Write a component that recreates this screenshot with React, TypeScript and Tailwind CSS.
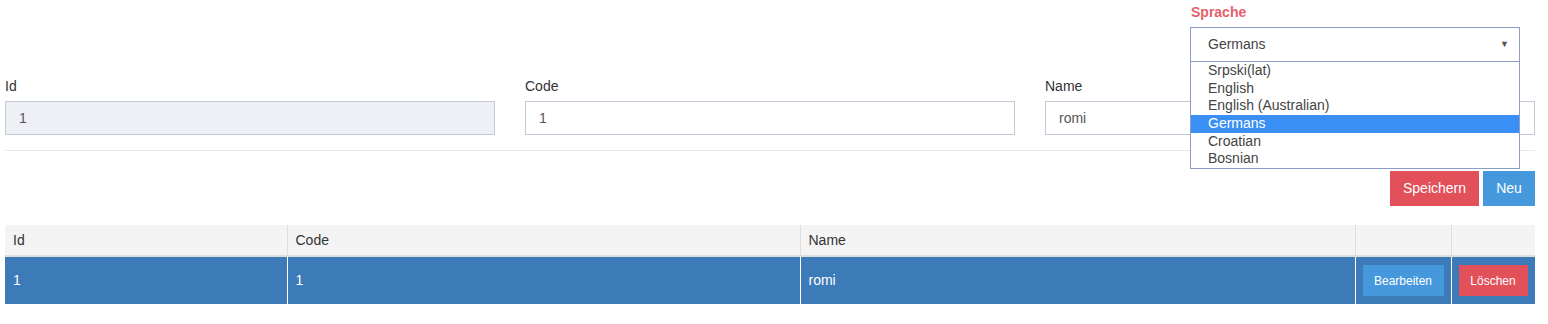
import React from 'react';

const languages = ['Srpski(lat)', 'English', 'English (Australian)', 'Germans', 'Croatian', 'Bosnian'];

const Field: React.FC<{ label: string; value: string; disabled?: boolean }> = ({ label, value, disabled }) => (
  <div className="flex flex-col">
    <label className="h-[20px] leading-[20px] mb-[5px] text-[14px] text-[#333]">{label}</label>
    <div
      className={`h-[34px] border border-[#c2cad8] px-[13px] flex items-center text-[14px] text-[#555] ${
        disabled ? 'bg-[#eef0f5]' : 'bg-white'
      }`}
    >
      {value}
    </div>
  </div>
);

export default function App() {
  const selected = 'Germans';

  return (
    <div className="pl-[5px] pr-[13px] pt-[2px] font-['Liberation_Sans',Arial,sans-serif] text-[14px] text-[#333] bg-white min-h-[324px]">
      {/* language picker */}
      <div className="flex justify-end pr-[15px] h-[74px]">
        <div className="relative w-[330px] z-10">
          <div className="h-[20px] leading-[20px] mb-[5px] font-bold text-[#e8606a] pl-[1px]">Sprache</div>
          <div className="h-[35px] border border-[#8e9cc8] bg-white flex items-center justify-between pl-[17px] pr-[10px] text-[#444]">
            <span>{selected}</span>
            <span className="text-[9px] text-[#555]">▼</span>
          </div>
          <ul className="absolute left-0 right-0 top-[59px] border border-[#8e9cc8] bg-white">
            {languages.map((l) => (
              <li
                key={l}
                className={`h-[17.67px] leading-[17.67px] pl-[17px] ${
                  l === selected ? 'bg-[#3a8ff5] text-white' : 'text-[#444]'
                }`}
              >
                {l}
              </li>
            ))}
          </ul>
        </div>
      </div>

      {/* form fields */}
      <div className="grid grid-cols-3 gap-[30px]">
        <Field label="Id" value="1" disabled />
        <Field label="Code" value="1" />
        <Field label="Name" value="romi" />
      </div>

      <div className="mt-[15px] h-px bg-[#e6eaef]" />

      <div className="mt-[20px] flex justify-end gap-[4px]">
        <button className="h-[35px] w-[89px] bg-[#e2505a] text-white text-[14px]">Speichern</button>
        <button className="h-[35px] w-[52px] bg-[#4598dc] text-white text-[14px]">Neu</button>
      </div>

      {/* table */}
      <table className="mt-[19px] w-full table-fixed border-collapse text-[14px]">
        <colgroup>
          <col className="w-[282px]" />
          <col className="w-[513px]" />
          <col className="w-[555px]" />
          <col className="w-[96px]" />
          <col className="w-[84px]" />
        </colgroup>
        <thead>
          <tr className="bg-[#f4f4f4] h-[31px] border-b-2 border-[#dedede]">
            <th className="text-left font-normal pl-[8px] border-r border-[#dedede]">Id</th>
            <th className="text-left font-normal pl-[8px] border-r border-[#dedede]">Code</th>
            <th className="text-left font-normal pl-[8px] border-r border-[#dedede]">Name</th>
            <th className="border-r border-[#dedede]" />
            <th />
          </tr>
        </thead>
        <tbody>
          <tr className="bg-[#3d7ab8] text-white h-[48px]">
            <td className="pl-[8px] border-r border-white">1</td>
            <td className="pl-[8px] border-r border-white">1</td>
            <td className="pl-[8px] border-r border-white">romi</td>
            <td className="pl-[7px] border-r border-white">
              <button className="h-[31px] w-[81px] bg-[#4598dc] text-white text-[12px]">Bearbeiten</button>
            </td>
            <td className="pl-[7px]">
              <button className="h-[31px] w-[69px] bg-[#e2505a] text-white text-[12px]">Löschen</button>
            </td>
          </tr>
        </tbody>
      </table>
    </div>
  );
}
